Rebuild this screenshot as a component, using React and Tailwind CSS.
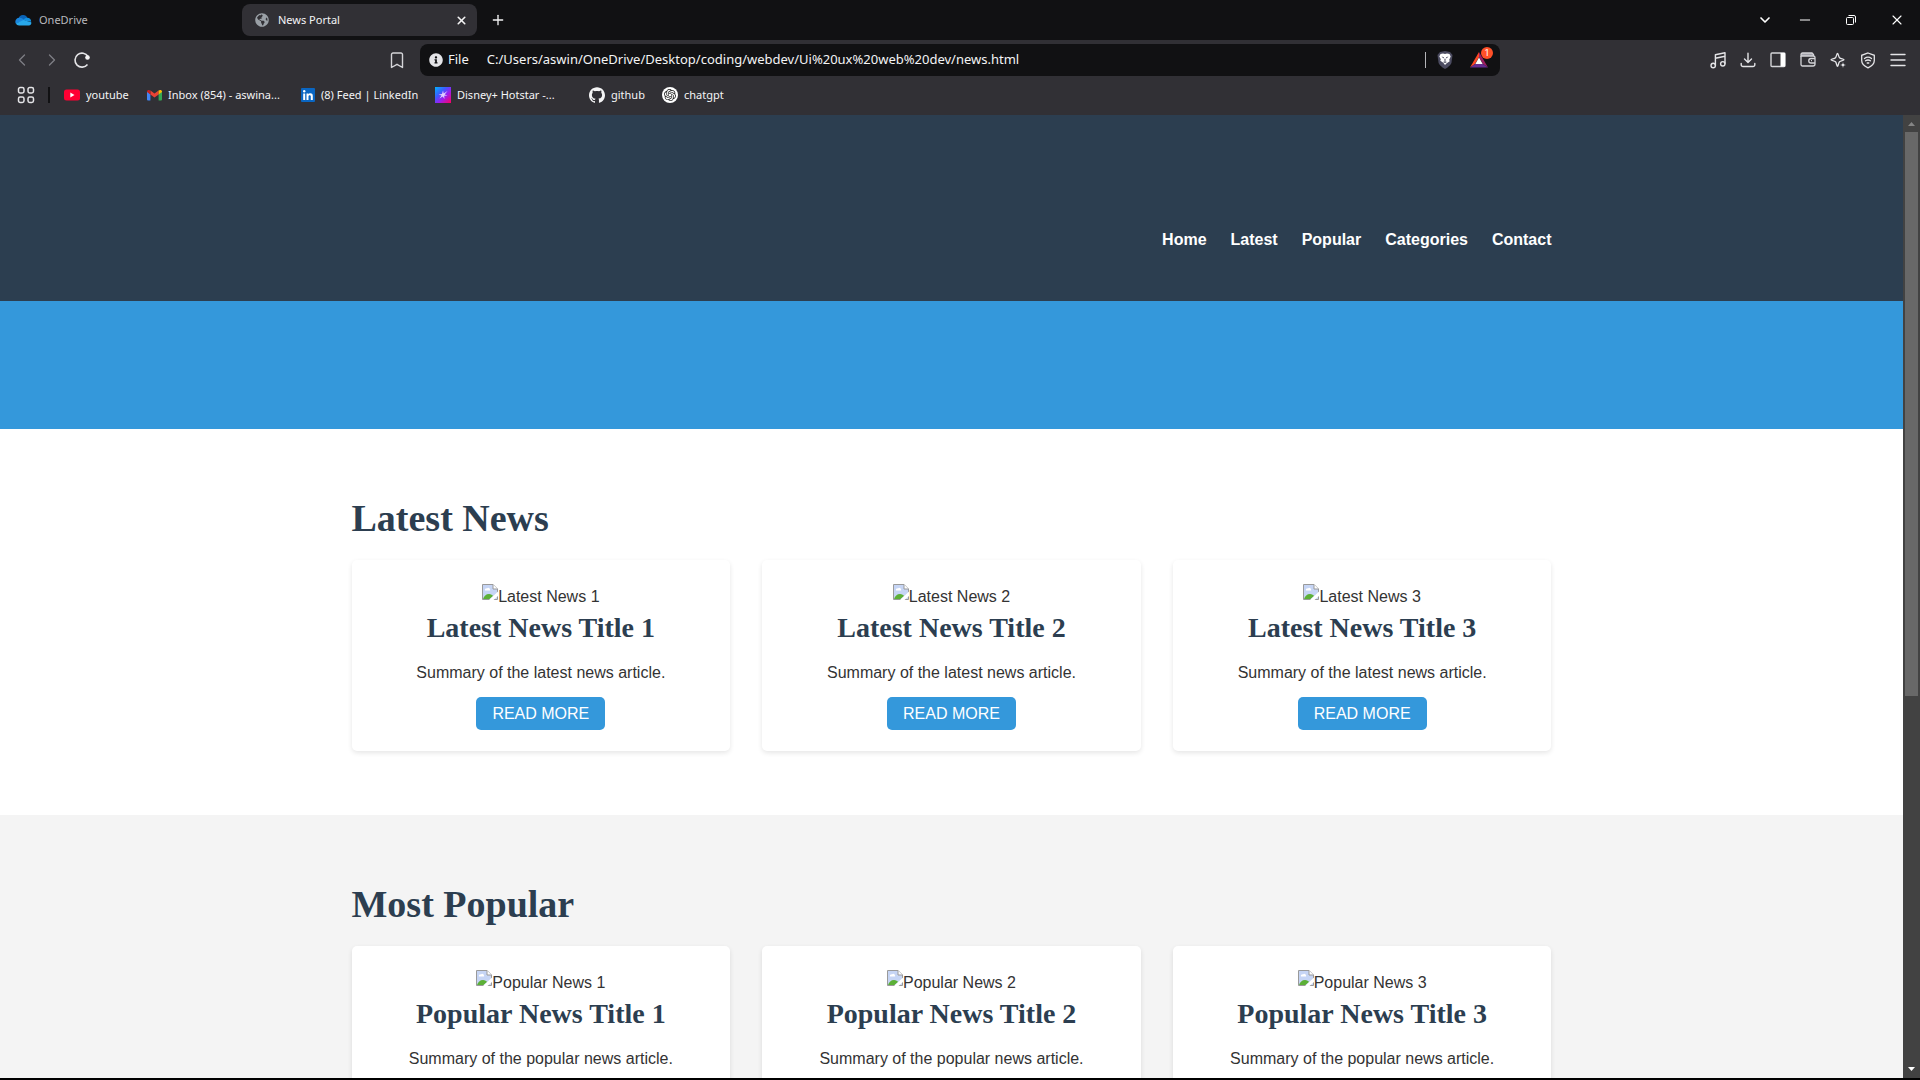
import React from "react";
import { ChevronLeft, ChevronRight, ChevronDown, X, Plus, Minus } from "lucide-react";
import { FaGlobeAmericas, FaInfoCircle } from "react-icons/fa";
import { SiGithub, SiOpenai } from "react-icons/si";

function OneDriveIcon() {
  return (
    <svg width="17" height="12" viewBox="0 0 17 12">
      <path d="M3.500 4.500a4.800 4.800 0 0 1 9-.5L9 8 2 7z" fill="#0a64b8" />
      <path d="M4 3.800A4 4 0 0 0 .8 9.600L10 6.500 7 4.200A5 5 0 0 0 4 3.800z" fill="#1a86dd" />
      <path d="M12 3.800c2.600 0 4.200 1.600 4.200 4L11 7 8.500 5.400A4.500 4.500 0 0 1 12 3.800z" fill="#1490df" />
      <path d="M.8 9.600 8.500 6l7.700 2.200a2.500 2.500 0 0 1-2.500 3.300H4A3.700 3.700 0 0 1 .8 9.600z" fill="#28a8ea" />
    </svg>
  );
}

function ReloadIcon() {
  return (
    <svg width="18" height="18" viewBox="0 0 18 18" fill="none" stroke="#e4e4e7" strokeWidth="1.6">
      <path d="M14.500 13.500A7 7 0 1 1 15 5.500" />
      <circle cx="14.500" cy="6.500" r="2.300" fill="#f4f4f5" stroke="none" />
    </svg>
  );
}

function BookmarkIcon() {
  return (
    <svg width="14" height="17" viewBox="0 0 14 17" fill="none" stroke="#d4d4d8" strokeWidth="1.400" strokeLinejoin="round">
      <path d="M3 1h8a1.500 1.500 0 0 1 1.500 1.500V15.500L7 12.300l-5.500 3.200v-13A1.500 1.500 0 0 1 3 1z" />
    </svg>
  );
}

function AppsIcon() {
  return (
    <svg width="18" height="18" viewBox="0 0 18 18" fill="none" stroke="#e4e4e7" strokeWidth="1.500">
      <rect x="1.500" y="1.500" width="5.500" height="5.500" rx="1.700" />
      <rect x="11" y="1.500" width="5.500" height="5.500" rx="1.700" />
      <rect x="1.500" y="11" width="5.500" height="5.500" rx="1.700" />
      <rect x="11" y="11" width="5.500" height="5.500" rx="1.700" />
    </svg>
  );
}

function YoutubeIcon() {
  return (
    <svg width="16" height="12" viewBox="0 0 16 12">
      <rect width="16" height="11" y=".5" rx="2.500" fill="#ff0033" />
      <path d="M6.300 3.500v5L10.500 6z" fill="#fff" />
    </svg>
  );
}

function GmailIcon() {
  return (
    <svg width="15" height="12" viewBox="0 0 15 12">
      <path d="M0 2.500 3.400 5v6.500H1a1 1 0 0 1-1-1z" fill="#4285f4" />
      <path d="M15 2.500 11.600 5v6.500H14a1 1 0 0 0 1-1z" fill="#34a853" />
      <path d="M3.400 1.500 7.500 4.600l4.100-3.100V5.500L7.500 8.600 3.400 5.500z" fill="#ea4335" />
      <path d="M11.600 1.500c1.500-1.200 3.400-.5 3.400 1V3l-3.400 2.500z" fill="#fbbc04" />
      <path d="M3.400 1.500C1.900.3 0 1 0 2.500V3l3.400 2.500z" fill="#c5221f" />
    </svg>
  );
}

function LinkedinIcon() {
  return (
    <svg width="14" height="14" viewBox="0 0 14 14">
      <rect width="14" height="14" rx="1" fill="#0a66c2" />
      <path d="M2.200 5.500h2V12h-2zM5.500 5.500h1.900v.9c.9-1.600 4.400-1.500 4.400 1.400V12h-2V8.300c0-1.600-2.300-1.500-2.300 0V12h-2z" fill="#fff" />
      <circle cx="3.200" cy="3.200" r="1.200" fill="#fff" />
    </svg>
  );
}

function HotstarIcon() {
  return (
    <svg width="16" height="16" viewBox="0 0 16 16">
      <defs>
        <linearGradient id="hotstar" x1="0" y1="0" x2="1" y2="1">
          <stop offset="0" stopColor="#00b4ff" />
          <stop offset=".35" stopColor="#3b5cff" />
          <stop offset=".6" stopColor="#9a1ff0" />
          <stop offset="1" stopColor="#ff0060" />
        </linearGradient>
      </defs>
      <rect width="16" height="16" fill="url(#hotstar)" />
      <path d="M8 3.500 8.700 6.600 12.500 4 9.700 7.400 12.500 8.500 9.200 8.800 9.500 12 7.700 9.400 4.500 11.500 6.500 8.500 3.500 7.500 7 7z" fill="#e0cfff" />
    </svg>
  );
}

function ChatIcon() {
  return (
    <span className="flex size-4 items-center justify-center rounded-full bg-white text-[#222]">
      <SiOpenai size={12} />
    </span>
  );
}

function BraveIcon() {
  return (
    <svg width="16" height="18" viewBox="0 0 16 18">
      <path d="M3 1 8 0l5 1 2.500 3-1 7.500C14 14 10 17 8 18c-2-1-6-4-6.500-6.500L.5 4z" fill="#4c4c61" />
      <path d="M3.500 3 6 2.500l2 .6 2-.6 2.500.5 1.200 2.500-1.500 3.300.5 1.500-3 2L8 14l-1.700-2.200-3-2 .5-1.500L2.300 5.500z" fill="#fff" />
      <path d="M4.500 5.500 7 6.200 6.500 7.500zM11.500 5.500 9 6.200l.5 1.300zM8 7l.8 2.300L8 10l-.8-.7zM6 11l2-.8 2 .8-2 1z" fill="#4c4c61" />
    </svg>
  );
}

function BatIcon() {
  return (
    <svg width="18" height="16" viewBox="0 0 18 16">
      <path d="M9 0v5L5 12l-5 3.500z" fill="#ff4724" />
      <path d="M9 0v5l4 7 5 3.500z" fill="#9e1f63" />
      <path d="m0 15.500 5-3.500h8l5 3.500z" fill="#662d91" />
      <path d="m9 5.500 3.700 6.400H5.300z" fill="#fff" />
    </svg>
  );
}

function RestoreIcon() {
  return (
    <svg width="12" height="12" viewBox="0 0 12 12" fill="none" stroke="#fff">
      <rect x="1.500" y="3.500" width="7" height="7" rx="1" />
      <path d="M3.500 1.500H9A1.500 1.500 0 0 1 10.500 3v5.500" />
    </svg>
  );
}

function PlaylistIcon() {
  return (
    <svg width="18" height="18" viewBox="0 0 18 18" fill="none" stroke="#e4e4e7" strokeWidth="1.400" strokeLinejoin="round">
      <circle cx="4.200" cy="14.500" r="2.200" />
      <circle cx="13.800" cy="12.800" r="2.200" />
      <path d="M6.400 14.500V3.800L16 1.800v11M6.400 7.300 16 5.300" />
    </svg>
  );
}

function DownloadIcon() {
  return (
    <svg width="16" height="16" viewBox="0 0 16 16" fill="none" stroke="#e4e4e7" strokeWidth="1.400" strokeLinecap="round" strokeLinejoin="round">
      <path d="M8 1.200v9M4.500 7 8 10.400 11.500 7M1.200 11.500v1.200A1.800 1.800 0 0 0 3 14.500h10a1.800 1.800 0 0 0 1.800-1.800v-1.200" />
    </svg>
  );
}

function SidebarIcon() {
  return (
    <svg width="16" height="16" viewBox="0 0 16 16">
      <rect x="1" y="1" width="14" height="13.500" rx="1" fill="none" stroke="#d4d4d8" strokeWidth="1.400" />
      <rect x="10.500" y="1" width="4.500" height="13.500" fill="#fff" />
    </svg>
  );
}

function WalletIcon() {
  return (
    <svg width="16" height="16" viewBox="0 0 16 16" fill="none" stroke="#d4d4d8" strokeWidth="1.300">
      <path d="M1 4V2.500A1.500 1.500 0 0 1 2.500 1H12l1.500 1.500V4z" fill="#a1a1aa" />
      <path d="M1 4v8.500A1.500 1.500 0 0 0 2.500 14H13a2 2 0 0 0 2-2V5.500A1.500 1.500 0 0 0 13.500 4M15 6.500h-4a2.200 2.200 0 0 0 0 4.500h4M11 8.700h1" />
    </svg>
  );
}

function LeoIcon() {
  return (
    <svg width="17" height="17" viewBox="0 0 17 17" fill="none" stroke="#e4e4e7" strokeWidth="1.300" strokeLinejoin="round">
      <path d="M7.500 1.300c.8 0 .9 3.300 2 4.500S14 7 14 7.800s-3.400.8-4.500 2-1.200 4.500-2 4.500-.9-3.300-2-4.500S1 8.600 1 7.800 4.400 7 5.500 5.800s1.200-4.500 2-4.500z" />
      <path d="m13 10 .9 2.100 2.100.9-2.100.9L13 16l-.9-2.100L10 13l2.100-.9z" fill="#e4e4e7" stroke="#313035" strokeWidth=".5" />
    </svg>
  );
}

function VpnIcon() {
  return (
    <svg width="16" height="17" viewBox="0 0 16 17" fill="none" stroke="#e4e4e7" strokeWidth="1.300" strokeLinecap="round">
      <path d="m8 1 6.300 2.300v5.200c0 3.500-3.300 6-6.300 7.300-3-1.300-6.300-3.800-6.300-7.300V3.300z" />
      <path d="M4.500 6.500c2-1.500 5-1.500 7 0M5.500 8.800c1.500-1 3.500-1 5 0M7.200 11h1.600" />
    </svg>
  );
}

function MenuIcon() {
  return (
    <svg width="16" height="14" viewBox="0 0 16 14" fill="none" stroke="#e4e4e7" strokeWidth="1.400" strokeLinecap="round">
      <path d="M1 1.500h14M1 7h14M1 12.500h14" />
    </svg>
  );
}

function BrokenImageIcon() {
  return (
    <svg width="16" height="16" viewBox="0 0 16 16" className="shrink-0">
      <path d="M.5 15.500V.500H11l4.500 4.500v10.500z" fill="#c6d5f5" stroke="#9a9a9a" />
      <path d="M11 .500V5h4.500" fill="#fff" stroke="#9a9a9a" />
      <path d="M3 6.500a1.500 1.500 0 0 1 2-2 1.700 1.700 0 0 1 3 1 .7.7 0 0 1 0 1z" fill="#fff" />
      <path d="M1 15c1-3 3-5 6-5 2 0 3.500 1 4 2l-3.500 3z" fill="#5cb037" />
      <path d="M16 7.500V12l-4.500 4H7z" fill="#fff" />
    </svg>
  );
}

const bookmarks = [
  { label: "youtube", icon: <YoutubeIcon />, box: "w-[83px]" },
  { label: "Inbox (854) - aswina...", icon: <GmailIcon />, box: "w-[154px]" },
  { label: "(8) Feed | LinkedIn", icon: <LinkedinIcon />, box: "w-[134px]" },
  { label: "Disney+ Hotstar -...", icon: <HotstarIcon />, box: "w-[154px]" },
  { label: "github", icon: <SiGithub size={16} />, box: "w-[73px]" },
  { label: "chatgpt", icon: <ChatIcon />, box: "w-[80px]" },
];

const tools = [
  { label: "Playlist", icon: <PlaylistIcon /> },
  { label: "Downloads", icon: <DownloadIcon /> },
  { label: "Sidebar", icon: <SidebarIcon /> },
  { label: "Wallet", icon: <WalletIcon /> },
  { label: "Leo AI", icon: <LeoIcon /> },
  { label: "VPN", icon: <VpnIcon /> },
  { label: "Menu", icon: <MenuIcon /> },
];

function BrowserChrome() {
  return (
    <header className="shrink-0 bg-[#313035] font-['Noto_Sans','Open_Sans',sans-serif] text-[11px] text-[#f4f4f5]">
      <div className="flex h-10 items-center bg-[#111113]">
        <button className="flex h-8 w-[242px] items-center gap-[7px] pl-[15px] text-[#b9b9bd]">
          <OneDriveIcon />
          <span>OneDrive</span>
        </button>
        <div className="flex h-8 w-[235px] items-center rounded-lg bg-[#313035] pr-[9px] pl-[13px]">
          <FaGlobeAmericas size={14} className="text-[#9aa0a6]" />
          <span className="ml-[9px] flex-1">News Portal</span>
          <button aria-label="Close tab"><X size={13} strokeWidth={3} /></button>
        </div>
        <button aria-label="New tab" className="ml-[13px]"><Plus size={16} strokeWidth={2} /></button>
        <div className="ml-auto flex items-center pr-[15px] text-white">
          <button aria-label="Search tabs" className="mr-6"><ChevronDown size={16} strokeWidth={2.500} /></button>
          <button aria-label="Minimize" className="mr-8"><Minus size={16} strokeWidth={1.500} /></button>
          <button aria-label="Restore" className="mr-8"><RestoreIcon /></button>
          <button aria-label="Close window"><X size={16} strokeWidth={1.700} /></button>
        </div>
      </div>

      <div className="flex h-10 items-center px-[7px]">
        <div className="flex-1">
          <div className="flex items-center pr-4 pl-[5px]">
            <button aria-label="Back" className="text-[#7e7e84]"><ChevronLeft size={20} strokeWidth={1.600} /></button>
            <button aria-label="Forward" className="ml-[10px] text-[#7e7e84]"><ChevronRight size={20} strokeWidth={1.600} /></button>
            <button aria-label="Reload" className="ml-[11px]"><ReloadIcon /></button>
            <button aria-label="Bookmark this page" className="ml-auto"><BookmarkIcon /></button>
          </div>
        </div>
        <div className="flex h-8 w-[1080px] items-center rounded-lg bg-[#111113] pr-1 pl-[9px]">
          <FaInfoCircle size={14} className="text-[#e4e4e7]" />
          <span className="ml-[5px] text-[13px]">File</span>
          <input
            aria-label="Address"
            className="ml-[18px] min-w-0 flex-1 bg-transparent text-[13px] outline-none"
            defaultValue="C:/Users/aswin/OneDrive/Desktop/coding/webdev/Ui%20ux%20web%20dev/news.html"
          />
          <span className="mr-[11px] h-4 w-px bg-[#b4b4b8]" />
          <button aria-label="Brave Shields"><BraveIcon /></button>
          <button aria-label="Brave Rewards" className="relative ml-[17px] w-[26px]">
            <BatIcon />
            <span className="absolute -top-[5px] right-[3px] flex size-3 items-center justify-center rounded-full bg-[#ff5028] font-['Roboto',sans-serif] text-[9px] leading-none text-white">1</span>
          </button>
        </div>
        <div className="flex flex-1 items-center justify-end">
          {tools.map((t) => (
            <button key={t.label} aria-label={t.label} className="flex w-[30px] justify-center">{t.icon}</button>
          ))}
        </div>
      </div>

      <div className="flex h-[35px] items-center pb-[5px] pl-[17px]">
        <button aria-label="All bookmarks"><AppsIcon /></button>
        <span className="mr-[14px] ml-[13px] h-4 w-[2px] bg-[#111113]" />
        {bookmarks.map((b) => (
          <a key={b.label} href="#" className={`flex items-center gap-[6px] whitespace-nowrap ${b.box}`}>
            {b.icon}
            <span>{b.label}</span>
          </a>
        ))}
      </div>
    </header>
  );
}

function NewsCard({ kind, n }) {
  return (
    <article className="flex flex-col items-center rounded-[5px] bg-white px-5 pt-6 pb-[21px] shadow-[0_2px_5px_rgba(0,0,0,0.1)]">
      <div className="flex items-start">
        <BrokenImageIcon />
        <span className="leading-[26px]">{kind} News {n}</span>
      </div>
      <h3 className="mt-[2px] font-['Georgia','Liberation_Serif',serif] text-[28px] leading-8 font-bold text-[#2c3e50]">
        {kind} News Title {n}
      </h3>
      <p className="mt-[17px] leading-6">Summary of the {kind.toLowerCase()} news article.</p>
      <a href="#" className="mt-3 rounded-[5px] bg-[#3498db] px-4 py-1 leading-[25px] text-white">READ MORE</a>
    </article>
  );
}

function NewsSection({ id, title, kind, className }) {
  return (
    <section id={id} className={className}>
      <div className="mx-auto max-w-[1200px] py-16">
        <h2 className="font-['Georgia','Liberation_Serif',serif] text-[38px] leading-[51px] font-bold text-[#2c3e50]">{title}</h2>
        <div className="mt-4 grid grid-cols-3 gap-8">
          {[1, 2, 3].map((n) => (
            <NewsCard key={n} kind={kind} n={n} />
          ))}
        </div>
      </div>
    </section>
  );
}

function ScrollBar() {
  return (
    <div className="flex w-[17px] shrink-0 flex-col items-center bg-[#424242]">
      <svg width="17" height="17" viewBox="0 0 17 17"><path d="m5 11 3.500-4 3.500 4z" fill="#858585" /></svg>
      <div className="h-[58.6%] w-[13px] bg-[#686868]" />
      <svg width="17" height="17" viewBox="0 0 17 17" className="mt-auto"><path d="m5 6 3.500 4L12 6z" fill="#fff" /></svg>
    </div>
  );
}

export default function App() {
  return (
    <div className="flex h-screen flex-col overflow-hidden border-b-2 border-black bg-white">
      <BrowserChrome />
      <div className="flex min-h-0 flex-1">
        <main className="min-w-0 flex-1 overflow-hidden font-['Liberation_Sans',Arial,sans-serif] text-base text-[#333]">
          <div className="bg-[#2c3e50]">
            <nav className="mx-auto flex max-w-[1200px] justify-end gap-6 pt-[113px] pb-[49px] leading-6 font-bold text-white">
              {["Home", "Latest", "Popular", "Categories", "Contact"].map((item) => (
                <a key={item} href="#">{item}</a>
              ))}
            </nav>
          </div>
          <div className="h-32 bg-[#3498db]" />
          <NewsSection id="latest" title="Latest News" kind="Latest" className="bg-white" />
          <NewsSection id="popular" title="Most Popular" kind="Popular" className="bg-[#f4f4f4]" />
        </main>
        <ScrollBar />
      </div>
    </div>
  );
}
